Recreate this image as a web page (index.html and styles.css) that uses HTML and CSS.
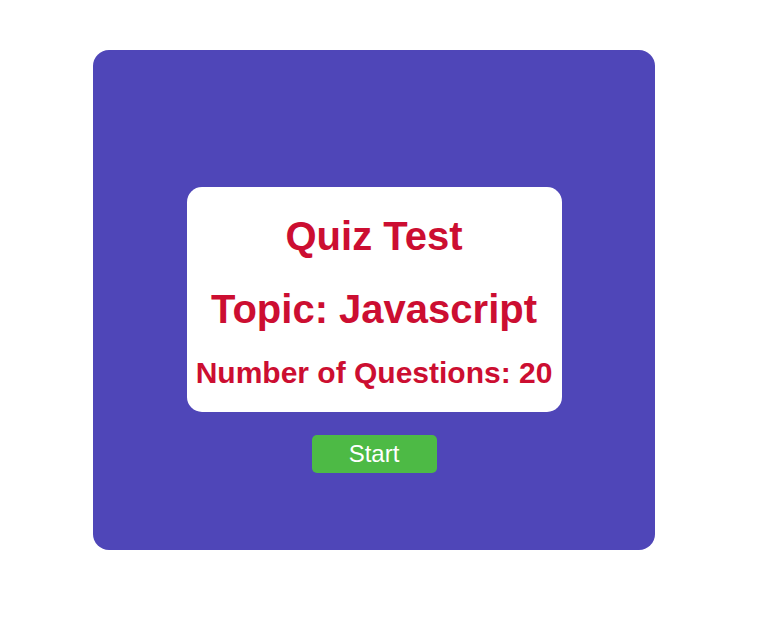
FILE: index.html
```html
<!DOCTYPE html>
<html lang="en">
<head>
<meta charset="utf-8">
<title>Quiz Test</title>
<link rel="stylesheet" href="styles.css">
</head>
<body>
  <main class="quiz">
    <section class="intro">
      <h1 class="title">Quiz Test</h1>
      <h1 class="topic">Topic: Javascript</h1>
      <h2 class="count">Number of Questions: 20</h2>
    </section>
    <button class="start">Start</button>
  </main>
</body>
</html>
```
FILE: styles.css
```css
html, body {
  margin: 0;
  padding: 0;
  background: #ffffff;
}
body {
  font-family: "Liberation Sans", Arial, sans-serif;
  padding: 50px 0 0 93px;
}
.quiz {
  box-sizing: border-box;
  width: 562px;
  height: 500px;
  background: #4f46b8;
  border-radius: 16px;
  padding-top: 137px;
  display: flex;
  flex-direction: column;
  align-items: center;
}
.intro {
  box-sizing: border-box;
  width: 375px;
  background: #ffffff;
  border-radius: 15px;
  padding: 26px 0 22px;
  text-align: center;
  color: #cc0e31;
}
.title, .topic {
  margin: 0;
  font-size: 40px;
  font-weight: bold;
  line-height: 46px;
}
.topic {
  margin-top: 27px;
}
.count {
  margin: 23px 0 0;
  font-size: 30px;
  font-weight: bold;
  line-height: 35px;
}
.start {
  margin-top: 23px;
  width: 125px;
  height: 38px;
  border: none;
  border-radius: 5px;
  background: #4dba45;
  color: #ffffff;
  font-family: "Liberation Sans", Arial, sans-serif;
  font-size: 24px;
  padding: 0;
  cursor: pointer;
}
```
